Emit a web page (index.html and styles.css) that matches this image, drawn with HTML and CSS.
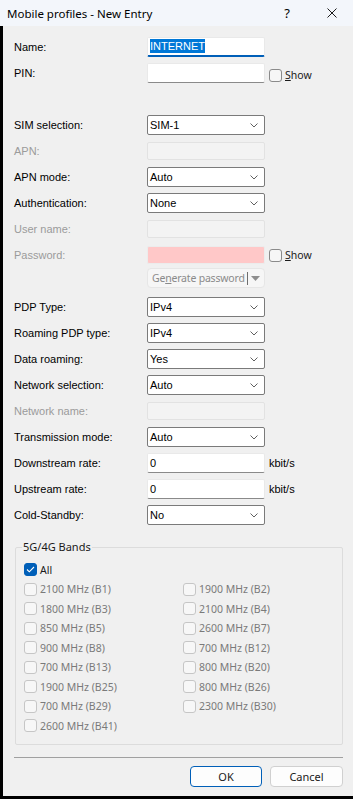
FILE: index.html
```html
<!DOCTYPE html>
<html lang="en">
<head>
  <meta charset="UTF-8" />
  <meta name="viewport" content="width=device-width, initial-scale=1.0"/>
  <title>Mobile profiles - New Entry</title>
  <link rel="stylesheet" href="styles.css">
</head>
<body>

<div class="dialog">
  <div class="titlebar">
    <span class="title">Mobile profiles - New Entry</span>
    <span class="tb-help">?</span>
    <span class="tb-close">
      <svg width="10" height="10" viewBox="0 0 10 10"><path d="M0.5 0.5L9.5 9.5M9.5 0.5L0.5 9.5" stroke="#1b1b1b" stroke-width="1" fill="none"/></svg>
    </span>
  </div>

  <div class="content">
    <div class="row">
      <label>Name:</label>
      <div class="edit focus"><span class="selected">INTERNET</span></div>
    </div>
    <div class="row">
      <label>PIN:</label>
      <div class="edit"></div>
      <div class="show"><span class="chk"></span><span><u>S</u>how</span></div>
    </div>
    <div class="row"></div>

    <div class="row">
      <label>SIM selection:</label>
      <div class="combo"><span>SIM-1</span><svg width="8" height="5" viewBox="0 0 8 5"><path d="M0.5 0.5L4 4L7.5 0.5" fill="none" stroke="#606060"/></svg></div>
    </div>
    <div class="row off">
      <label>APN:</label>
      <div class="edit disabled"></div>
    </div>
    <div class="row">
      <label>APN mode:</label>
      <div class="combo"><span>Auto</span><svg width="8" height="5" viewBox="0 0 8 5"><path d="M0.5 0.5L4 4L7.5 0.5" fill="none" stroke="#606060"/></svg></div>
    </div>
    <div class="row">
      <label>Authentication:</label>
      <div class="combo"><span>None</span><svg width="8" height="5" viewBox="0 0 8 5"><path d="M0.5 0.5L4 4L7.5 0.5" fill="none" stroke="#606060"/></svg></div>
    </div>
    <div class="row off">
      <label>User name:</label>
      <div class="edit disabled"></div>
    </div>
    <div class="row off">
      <label>Password:</label>
      <div class="edit pink"></div>
      <div class="show"><span class="chk"></span><span><u>S</u>how</span></div>
    </div>
    <div class="row gen-row">
      <span></span>
      <div class="gen">
        <span class="gen-text">Ge<u>n</u>erate password</span>
        <span class="gen-split"></span>
        <svg width="9" height="5" viewBox="0 0 9 5"><path d="M0 0H9L4.5 5Z" fill="#8e8e8e"/></svg>
      </div>
    </div>
    <div class="row">
      <label>PDP Type:</label>
      <div class="combo"><span>IPv4</span><svg width="8" height="5" viewBox="0 0 8 5"><path d="M0.5 0.5L4 4L7.5 0.5" fill="none" stroke="#606060"/></svg></div>
    </div>
    <div class="row">
      <label>Roaming PDP type:</label>
      <div class="combo"><span>IPv4</span><svg width="8" height="5" viewBox="0 0 8 5"><path d="M0.5 0.5L4 4L7.5 0.5" fill="none" stroke="#606060"/></svg></div>
    </div>
    <div class="row">
      <label>Data roaming:</label>
      <div class="combo"><span>Yes</span><svg width="8" height="5" viewBox="0 0 8 5"><path d="M0.5 0.5L4 4L7.5 0.5" fill="none" stroke="#606060"/></svg></div>
    </div>
    <div class="row">
      <label>Network selection:</label>
      <div class="combo"><span>Auto</span><svg width="8" height="5" viewBox="0 0 8 5"><path d="M0.5 0.5L4 4L7.5 0.5" fill="none" stroke="#606060"/></svg></div>
    </div>
    <div class="row off">
      <label>Network name:</label>
      <div class="edit disabled"></div>
    </div>
    <div class="row">
      <label>Transmission mode:</label>
      <div class="combo"><span>Auto</span><svg width="8" height="5" viewBox="0 0 8 5"><path d="M0.5 0.5L4 4L7.5 0.5" fill="none" stroke="#606060"/></svg></div>
    </div>
    <div class="row">
      <label>Downstream rate:</label>
      <div class="edit">0</div>
      <span class="unit">kbit/s</span>
    </div>
    <div class="row">
      <label>Upstream rate:</label>
      <div class="edit">0</div>
      <span class="unit">kbit/s</span>
    </div>
    <div class="row">
      <label>Cold-Standby:</label>
      <div class="combo"><span>No</span><svg width="8" height="5" viewBox="0 0 8 5"><path d="M0.5 0.5L4 4L7.5 0.5" fill="none" stroke="#606060"/></svg></div>
    </div>

    <fieldset class="bands">
      <legend>5G/4G Bands</legend>
      <div class="band-grid">
        <div class="band all"><span class="chk on"><svg width="9" height="7" viewBox="0 0 9 7"><path d="M1 3.5L3.3 5.8L8 1" fill="none" stroke="#fff" stroke-width="1.1"/></svg></span>All</div>
        <div></div>
        <div class="band"><span class="chk"></span>2100 MHz (B1)</div>
        <div class="band"><span class="chk"></span>1900 MHz (B2)</div>
        <div class="band"><span class="chk"></span>1800 MHz (B3)</div>
        <div class="band"><span class="chk"></span>2100 MHz (B4)</div>
        <div class="band"><span class="chk"></span>850 MHz (B5)</div>
        <div class="band"><span class="chk"></span>2600 MHz (B7)</div>
        <div class="band"><span class="chk"></span>900 MHz (B8)</div>
        <div class="band"><span class="chk"></span>700 MHz (B12)</div>
        <div class="band"><span class="chk"></span>700 MHz (B13)</div>
        <div class="band"><span class="chk"></span>800 MHz (B20)</div>
        <div class="band"><span class="chk"></span>1900 MHz (B25)</div>
        <div class="band"><span class="chk"></span>800 MHz (B26)</div>
        <div class="band"><span class="chk"></span>700 MHz (B29)</div>
        <div class="band"><span class="chk"></span>2300 MHz (B30)</div>
        <div class="band"><span class="chk"></span>2600 MHz (B41)</div>
      </div>
    </fieldset>

    <div class="sep"></div>

    <div class="actions">
      <button class="btn default">OK</button>
      <button class="btn cancel">Cancel</button>
    </div>
  </div>
</div>

</body>
</html>
```

FILE: styles.css
```css
body {
  margin: 0;
  background-color: #f0f0f0;
  font-family: "Liberation Sans", Arial, sans-serif;
  font-size: 11px;
  color: #000;
}

.dialog {
  width: 353px;
  height: 799px;
  display: flex;
  flex-direction: column;
}

.titlebar {
  height: 26px;
  flex: none;
  background-color: #f3f6fb;
  display: flex;
  align-items: center;
  font-family: "Noto Sans", sans-serif;
  font-size: 11.5px;
}

.title {
  flex: 1;
  padding-left: 7px;
}

.tb-help {
  width: 46px;
  text-align: center;
  font-size: 13px;
}

.tb-close {
  width: 43px;
  display: flex;
  justify-content: center;
}

.content {
  flex: 1;
  border-left: 3px solid #000;
  border-bottom: 3px solid #000;
  padding: 11px 10px 0 11px;
}

.row {
  display: grid;
  grid-template-columns: 133px 118px auto;
  height: 26px;
  align-items: start;
}

.row label {
  line-height: 20px;
}

.row.off label {
  color: #9b9b9b;
}

.edit {
  height: 20px;
  box-sizing: border-box;
  background-color: #fff;
  border: 1px solid #e9e9e9;
  border-bottom-color: #8a8a8a;
  border-radius: 2px;
  padding-left: 2px;
  line-height: 18px;
}

.edit.focus {
  border-bottom: 2px solid #005fb8;
  line-height: 17px;
}

.selected {
  background-color: #0078d7;
  color: #fff;
  padding: 1px 0;
}

.edit.disabled {
  height: 18px;
  margin-top: 1px;
  background-color: #f3f3f3;
  border-color: #e2e2e2;
}

.edit.pink {
  height: 18px;
  margin-top: 1px;
  background-color: #ffc8c8;
  border-color: #ececec;
}

.combo {
  height: 20px;
  box-sizing: border-box;
  background-color: #fff;
  border: 1px solid #7a7a7a;
  border-radius: 2px;
  padding: 0 6px 0 2px;
  display: flex;
  align-items: center;
  justify-content: space-between;
}

.show {
  display: flex;
  align-items: center;
  gap: 3px;
  height: 20px;
  padding: 2px 0 0 4px;
  font-family: "Noto Sans", sans-serif;
  font-size: 10.5px;
  color: #1a1a1a;
}

.row.off .show {
  padding-top: 0;
}

.unit {
  line-height: 20px;
  padding-left: 4px;
}

.chk {
  width: 13px;
  height: 13px;
  flex: none;
  box-sizing: border-box;
  border: 1px solid #8a8a8a;
  border-radius: 3px;
  background-color: #f6f6f6;
  display: flex;
  align-items: center;
  justify-content: center;
}

.chk.on {
  background-color: #005fb8;
  border-color: #005fb8;
}

.gen-row .gen {
  margin-top: -3px;
}

.gen {
  height: 20px;
  box-sizing: border-box;
  border: 1px solid #e6e6e6;
  border-radius: 4px;
  background-color: #f6f6f6;
  display: flex;
  align-items: center;
  padding-right: 4px;
  font-family: "Noto Sans", sans-serif;
  font-size: 10.5px;
  color: #8a8a8a;
  white-space: nowrap;
}

.gen-text {
  flex: 1;
  padding-left: 4px;
  letter-spacing: -0.2px;
}

.gen-split {
  width: 1px;
  height: 13px;
  background-color: #6e6e6e;
  margin-right: 3px;
}

.bands {
  margin: 8px 0 0 1px;
  padding: 5px 8px 8px 8px;
  border: 1px solid #dcdcdc;
  border-radius: 2px;
  min-inline-size: 0;
}

.bands legend {
  margin-left: -2px;
  padding: 0 1px;
  line-height: 16px;
  font-family: "Noto Sans", sans-serif;
  font-size: 11px;
  color: #1a1a1a;
}

.band-grid {
  display: grid;
  grid-template-columns: 159px auto;
  grid-auto-rows: 19.5px;
}

.band {
  display: flex;
  align-items: center;
  gap: 3px;
  font-family: "Noto Sans", sans-serif;
  font-size: 10.5px;
  color: #7a7a7a;
}

.band .chk {
  border-color: #c6c6c6;
  background-color: #f7f7f7;
}

.band.all {
  color: #1a1a1a;
}

.band.all .chk {
  border-color: #005fb8;
  background-color: #005fb8;
}

.sep {
  height: 1px;
  background-color: #a0a0a0;
  margin-top: 12px;
}

.actions {
  display: flex;
  justify-content: flex-end;
  gap: 8px;
  margin-top: 8px;
}

.btn {
  height: 21px;
  box-sizing: border-box;
  border: 1px solid #d0d0d0;
  border-radius: 4px;
  background-color: #fdfdfd;
  font-family: "Noto Sans", sans-serif;
  font-size: 11px;
  color: #1a1a1a;
  padding: 0;
}

.btn.default {
  width: 72px;
  border-color: #005fb8;
}

.btn.cancel {
  width: 73px;
}
```
